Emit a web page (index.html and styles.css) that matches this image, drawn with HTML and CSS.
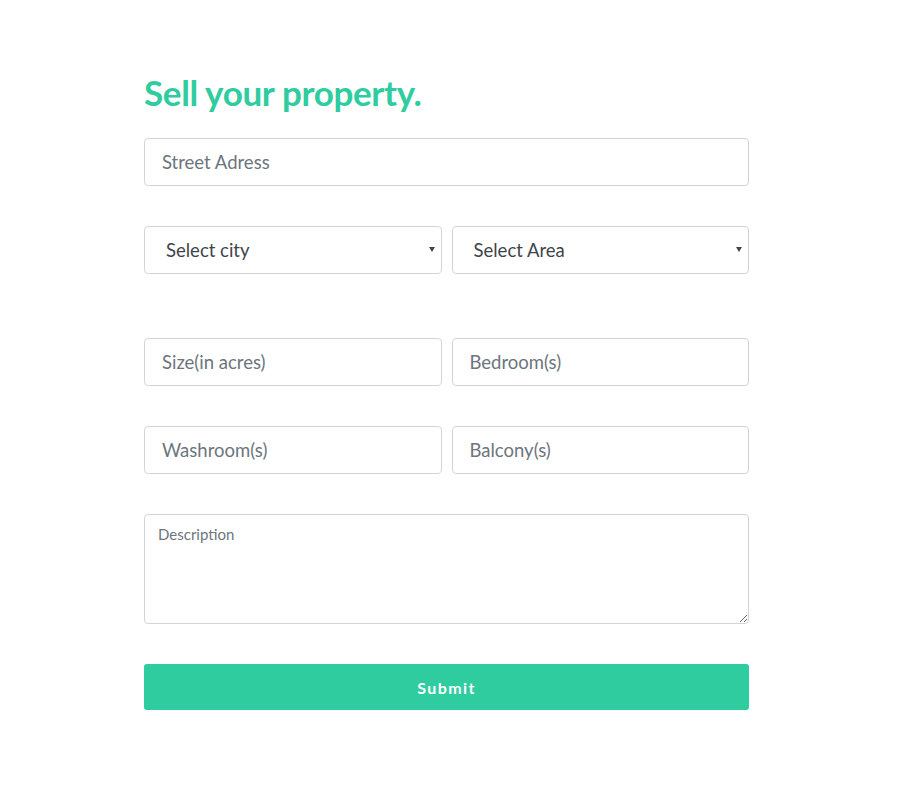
FILE: index.html
```html
<!DOCTYPE html>
<html>
<head>
<meta charset="utf-8">
<link rel="stylesheet" href="styles.css">
</head>
<body>
<main class="page">
  <form class="sell-form">
    <h1 class="title">Sell your property.</h1>
    <input class="field" type="text" placeholder="Street Adress">
    <div class="row row-select">
      <div class="select-wrap">
        <select class="field select"><option>Select city</option></select>
      </div>
      <div class="select-wrap">
        <select class="field select"><option>Select Area</option></select>
      </div>
    </div>
    <div class="row row-wide">
      <input class="field" type="text" placeholder="Size(in acres)">
      <input class="field" type="text" placeholder="Bedroom(s)">
    </div>
    <div class="row">
      <input class="field" type="text" placeholder="Washroom(s)">
      <input class="field" type="text" placeholder="Balcony(s)">
    </div>
    <textarea class="field area" placeholder="Description"></textarea>
    <button class="submit" type="button">Submit</button>
  </form>
</main>
</body>
</html>
```
FILE: styles.css
```css
* { box-sizing: border-box; }
html, body { margin: 0; padding: 0; background: #fff; }
body { font-family: "Lato", "Open Sans", sans-serif; }
.page { padding: 71px 0 0 144px; }
.sell-form { width: 605px; display: flex; flex-direction: column; }
.title {
  margin: 0 0 24px 0;
  font-size: 35px;
  line-height: 43px;
  font-weight: 700;
  color: #2ecc9f;
  letter-spacing: -0.35px;
}
.field {
  display: block;
  width: 100%;
  height: 48px;
  border: 1px solid #d1d5db;
  border-radius: 4px;
  background: #fff;
  font-family: inherit;
  font-size: 18.5px;
  color: #495057;
  padding: 0 16px 0 17px;
  outline: none;
}
.field::placeholder { color: #6c757d; opacity: 1; }
.row { display: flex; gap: 10px; margin-top: 40px; }
.row > * { flex: 1; }
.row-wide { margin-top: 64px; }
.select-wrap { position: relative; }
.select {
  -webkit-appearance: none;
  appearance: none;
  padding-left: 21px;
  font-size: 18.5px;
  color: #3e444a;
}
.select-wrap::after {
  content: "";
  position: absolute;
  right: 7px;
  top: 21px;
  border-left: 3px solid transparent;
  border-right: 3px solid transparent;
  border-top: 5px solid #444;
  pointer-events: none;
}
.area {
  margin-top: 40px;
  height: 110px;
  padding: 10px 13px;
  font-size: 15px;
  resize: both;
}
.submit {
  margin-top: 40px;
  height: 46px;
  border: none;
  border-radius: 3px;
  background: #2ecc9f;
  color: #fff;
  font-family: inherit;
  font-weight: 700;
  font-size: 16px;
  letter-spacing: 1.4px;
  cursor: pointer;
}
```
